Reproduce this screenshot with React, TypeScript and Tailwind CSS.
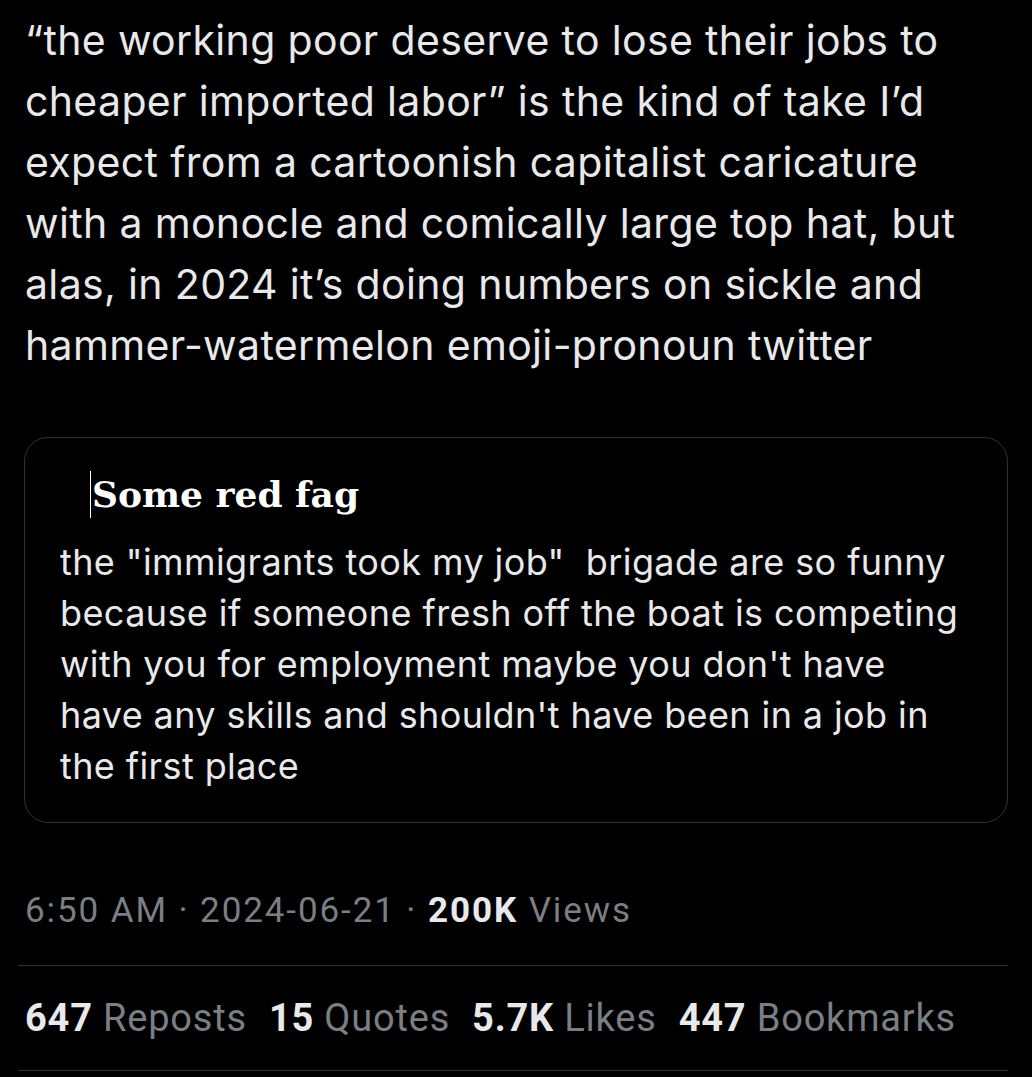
export default function App() {
  const main = [
    "“the working poor deserve to lose their jobs to",
    "cheaper imported labor” is the kind of take I’d",
    "expect from a cartoonish capitalist caricature",
    "with a monocle and comically large top hat, but",
    "alas, in 2024 it’s doing numbers on sickle and",
    "hammer-watermelon emoji-pronoun twitter",
  ];
  const quote = [
    "the \"immigrants took my job\"\u00a0 brigade are so funny",
    "because if someone fresh off the boat is competing",
    "with you for employment maybe you don't have",
    "have any skills and shouldn't have been in a job in",
    "the first place",
  ];

  return (
    <div className="w-[1032px] h-[1077px] bg-black overflow-hidden" style={{ fontFamily: "Inter, 'Noto Sans', sans-serif" }}>
      <div className="pl-[25px] pt-[10px] text-[41px] leading-[61px] tracking-[0.35px] text-[#e7e9ea] whitespace-nowrap">
        {main.map((l) => (
          <div key={l}>{l}</div>
        ))}
      </div>

      <div className="mt-[61px] ml-[24px] w-[984px] h-[386px] border border-[#2f3336] rounded-[24px] pl-[35px] pt-[28px]">
        <div className="pl-[30px] flex items-center">
          <span className="w-px h-[47px] bg-white" />
          <span className="ml-px text-[36px] font-bold text-white leading-[56px]" style={{ fontFamily: "'DejaVu Serif', 'Liberation Serif', serif" }}>
            Some red fag
          </span>
        </div>
        <div className="mt-[15px] text-[36px] leading-[51px] tracking-[0.4px] text-[#e7e9ea] whitespace-nowrap">
          {quote.map((l) => (
            <div key={l}>{l}</div>
          ))}
        </div>
      </div>

      <div className="pl-[25px] mt-[68px] text-[35px] leading-[40px] tracking-[1.9px] text-[#7a7f84] whitespace-nowrap" style={{ fontFamily: "Roboto, sans-serif" }}>
        6:50 AM · 2024-06-21 · <span className="font-bold text-[#e7e9ea]">200K</span> Views
      </div>

      <div className="ml-[18px] w-[990px] h-px bg-[#2f3336] mt-[34px]" />

      <div className="pl-[25px] h-[104px] flex items-center gap-[22px] text-[38px] tracking-[0.8px] text-[#7a7f84] whitespace-nowrap" style={{ fontFamily: "Roboto, sans-serif" }}>
        <span><span className="font-bold text-[#e7e9ea]">647</span> Reposts</span>
        <span><span className="font-bold text-[#e7e9ea]">15</span> Quotes</span>
        <span><span className="font-bold text-[#e7e9ea]">5.7K</span> Likes</span>
        <span><span className="font-bold text-[#e7e9ea]">447</span> Bookmarks</span>
      </div>

      <div className="ml-[18px] w-[990px] h-px bg-[#2f3336]" />
    </div>
  );
}
